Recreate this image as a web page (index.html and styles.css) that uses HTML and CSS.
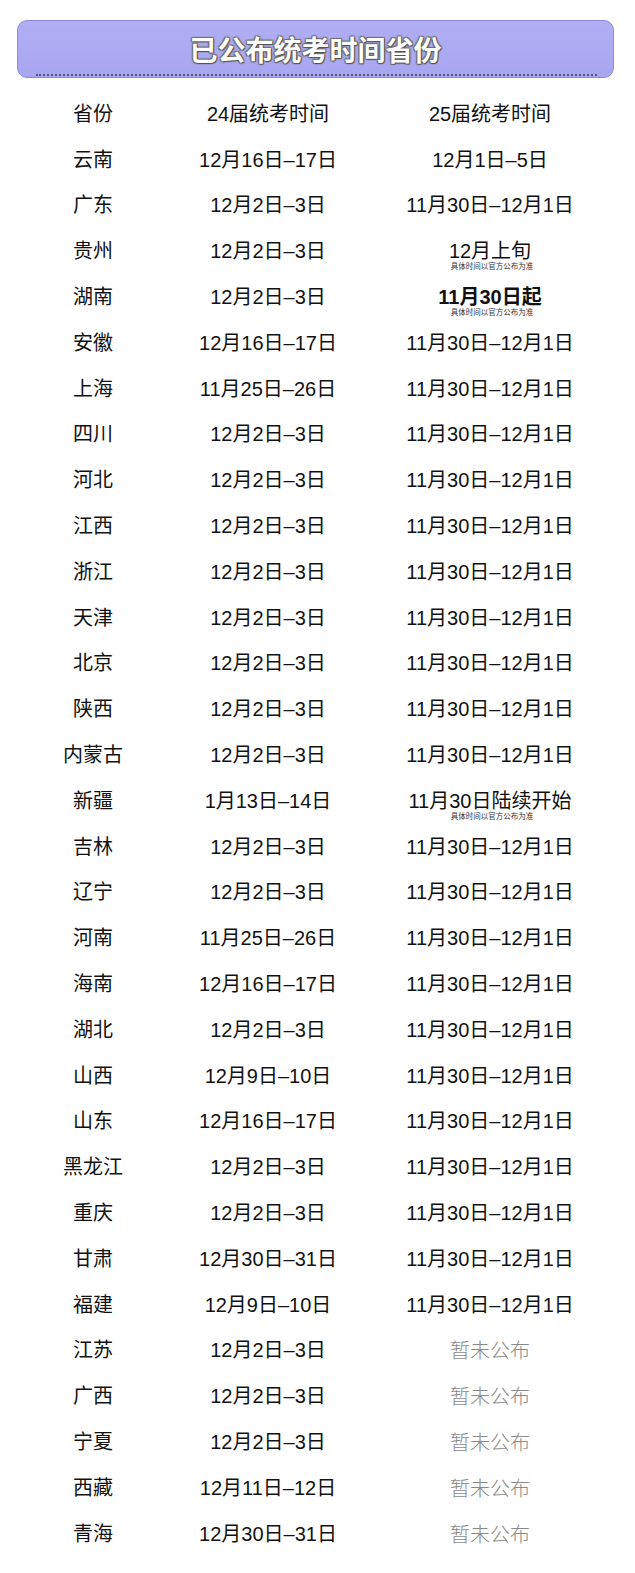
FILE: index.html
```html
<!DOCTYPE html>
<html lang="zh-CN">
<head>
<meta charset="utf-8">
<title>已公布统考时间省份</title>
<link rel="stylesheet" href="styles.css">
</head>
<body>
<div class="page">
  <div class="banner">
    <span class="banner-title">已公布统考时间省份</span>
  </div>
  <div class="table">
    <div class="row head"><span>省份</span><span>24届统考时间</span><span>25届统考时间</span></div>
    <div class="row"><span>云南</span><span>12月16日–17日</span><span>12月1日–5日</span></div>
    <div class="row"><span>广东</span><span>12月2日–3日</span><span>11月30日–12月1日</span></div>
    <div class="row"><span>贵州</span><span>12月2日–3日</span><span class="noted">12月上旬<em class="note">具体时间以官方公布为准</em></span></div>
    <div class="row"><span>湖南</span><span>12月2日–3日</span><span class="noted bold">11月30日起<em class="note">具体时间以官方公布为准</em></span></div>
    <div class="row"><span>安徽</span><span>12月16日–17日</span><span>11月30日–12月1日</span></div>
    <div class="row"><span>上海</span><span>11月25日–26日</span><span>11月30日–12月1日</span></div>
    <div class="row"><span>四川</span><span>12月2日–3日</span><span>11月30日–12月1日</span></div>
    <div class="row"><span>河北</span><span>12月2日–3日</span><span>11月30日–12月1日</span></div>
    <div class="row"><span>江西</span><span>12月2日–3日</span><span>11月30日–12月1日</span></div>
    <div class="row"><span>浙江</span><span>12月2日–3日</span><span>11月30日–12月1日</span></div>
    <div class="row"><span>天津</span><span>12月2日–3日</span><span>11月30日–12月1日</span></div>
    <div class="row"><span>北京</span><span>12月2日–3日</span><span>11月30日–12月1日</span></div>
    <div class="row"><span>陕西</span><span>12月2日–3日</span><span>11月30日–12月1日</span></div>
    <div class="row"><span>内蒙古</span><span>12月2日–3日</span><span>11月30日–12月1日</span></div>
    <div class="row"><span>新疆</span><span>1月13日–14日</span><span class="noted">11月30日陆续开始<em class="note">具体时间以官方公布为准</em></span></div>
    <div class="row"><span>吉林</span><span>12月2日–3日</span><span>11月30日–12月1日</span></div>
    <div class="row"><span>辽宁</span><span>12月2日–3日</span><span>11月30日–12月1日</span></div>
    <div class="row"><span>河南</span><span>11月25日–26日</span><span>11月30日–12月1日</span></div>
    <div class="row"><span>海南</span><span>12月16日–17日</span><span>11月30日–12月1日</span></div>
    <div class="row"><span>湖北</span><span>12月2日–3日</span><span>11月30日–12月1日</span></div>
    <div class="row"><span>山西</span><span>12月9日–10日</span><span>11月30日–12月1日</span></div>
    <div class="row"><span>山东</span><span>12月16日–17日</span><span>11月30日–12月1日</span></div>
    <div class="row"><span>黑龙江</span><span>12月2日–3日</span><span>11月30日–12月1日</span></div>
    <div class="row"><span>重庆</span><span>12月2日–3日</span><span>11月30日–12月1日</span></div>
    <div class="row"><span>甘肃</span><span>12月30日–31日</span><span>11月30日–12月1日</span></div>
    <div class="row"><span>福建</span><span>12月9日–10日</span><span>11月30日–12月1日</span></div>
    <div class="row"><span>江苏</span><span>12月2日–3日</span><span class="pending">暂未公布</span></div>
    <div class="row"><span>广西</span><span>12月2日–3日</span><span class="pending">暂未公布</span></div>
    <div class="row"><span>宁夏</span><span>12月2日–3日</span><span class="pending">暂未公布</span></div>
    <div class="row"><span>西藏</span><span>12月11日–12日</span><span class="pending">暂未公布</span></div>
    <div class="row"><span>青海</span><span>12月30日–31日</span><span class="pending">暂未公布</span></div>
  </div>
</div>
</body>
</html>
```

FILE: styles.css
```css
html, body {
  margin: 0;
  padding: 0;
  background: #ffffff;
}

.page {
  width: 635px;
  height: 1573px;
  padding-top: 20px;
  box-sizing: border-box;
  font-family: "Liberation Sans", "Noto Sans CJK SC", sans-serif;
  font-weight: 400;
  color: #111111;
}

.banner {
  margin: 0 21px 0 17px;
  height: 58px;
  box-sizing: border-box;
  border-radius: 10px;
  background: linear-gradient(#b0aff5, #a7a6f0);
  border: 1px solid #8d8cdc;
  display: flex;
  align-items: center;
  justify-content: center;
  position: relative;
}

.banner::after {
  content: "";
  position: absolute;
  left: 18px;
  right: 16px;
  bottom: 1px;
  border-bottom: 2px dotted #55547a;
}

.banner-title {
  font-family: "Noto Sans CJK SC", sans-serif;
  font-size: 28px;
  font-weight: 700;
  color: #ffffff;
  margin-top: -1px;
  text-shadow: 0 0 1px #444, 1px 1px 1px #555, -1px -1px 1px #777, 1px -1px 1px #777, -1px 1px 1px #777;
}

.table {
  margin-top: 13px;
}

.row {
  display: grid;
  grid-template-columns: 186px 164px 280px;
  height: 45.8px;
  align-items: center;
  font-size: 20px;
  line-height: 24px;
}

.row > span {
  text-align: center;
  white-space: nowrap;
}

.noted {
  position: relative;
}

.note {
  position: absolute;
  left: 0;
  right: 0;
  top: 22px;
  font-style: normal;
  font-family: "Noto Sans CJK SC", sans-serif;
  font-weight: 400;
  font-size: 7.5px;
  line-height: 9px;
  color: #333;
  text-align: center;
  padding-left: 4px;
}

.bold {
  font-weight: 700;
}

.pending {
  color: #8a8a8a;
  font-family: "Noto Sans CJK SC", sans-serif;
  font-weight: 300;
}
```
